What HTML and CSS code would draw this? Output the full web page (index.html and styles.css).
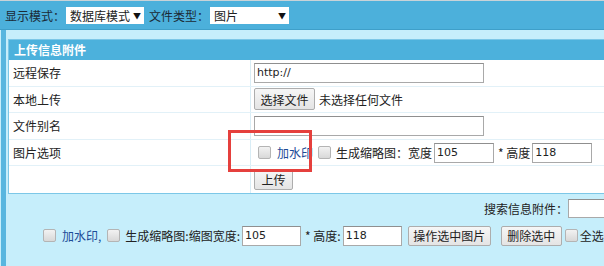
FILE: index.html
```html
<!DOCTYPE html>
<html>
  <head>
    <meta charset="utf-8">
    <title>上传信息附件</title>
    <link rel="stylesheet" href="styles.css">
  </head>
  <body>
    <div class="toolbar">
      <label class="toolbar-label">显示模式：</label>
      <span class="select-wrap select-mode">
        <select class="select"><option>数据库模式</option></select>
      </span>
      <label class="toolbar-label gap">文件类型：</label>
      <span class="select-wrap select-type">
        <select class="select"><option>图片</option></select>
      </span>
    </div>
    <div class="page">
      <div class="band"></div>
      <div class="panel">
        <div class="panel-title">上传信息附件</div>
        <div class="form-row">
          <div class="form-label">远程保存</div>
          <div class="form-value"><input class="text-input wide" type="text" value="http://"></div>
        </div>
        <div class="form-row">
          <div class="form-label">本地上传</div>
          <div class="form-value">
            <button class="btn btn-file">选择文件</button>
            <span class="file-name">未选择任何文件</span>
          </div>
        </div>
        <div class="form-row">
          <div class="form-label">文件别名</div>
          <div class="form-value"><input class="text-input wide" type="text"></div>
        </div>
        <div class="form-row">
          <div class="form-label">图片选项</div>
          <div class="form-value">
            <input class="check" type="checkbox">
            <span class="link-text">加水印</span>
            <input class="check check-thumb" type="checkbox">
            <span class="opt-text">生成缩略图：宽度</span>
            <input class="text-input num" type="text" value="105">
            <span class="opt-text star">* 高度</span>
            <input class="text-input num" type="text" value="118">
          </div>
        </div>
        <div class="form-row last">
          <div class="form-label"></div>
          <div class="form-value"><button class="btn btn-upload">上传</button></div>
        </div>
        <div class="mark"></div>
      </div>
      <div class="search-row">
        <span>搜索信息附件：</span><input class="text-input search-input" type="text">
      </div>
      <div class="action-row">
        <input class="check" type="checkbox">
        <span class="link-text">加水印,</span>
        <input class="check" type="checkbox">
        <span class="opt-text">生成缩略图:缩图宽度:</span>
        <input class="text-input num-sm" type="text" value="105">
        <span class="opt-text star">* 高度:</span>
        <input class="text-input num-sm" type="text" value="118">
        <button class="btn btn-action">操作选中图片</button>
        <button class="btn btn-delete">删除选中</button>
        <input class="check check-all" type="checkbox">
        <span class="opt-text all-text">全选</span>
      </div>
    </div>
  </body>
</html>
```

FILE: styles.css
```css
* {
  box-sizing: border-box;
  margin: 0;
  padding: 0;
}
html,
body {
  height: 100%;
}
body {
  width: 700px;
  overflow: hidden;
  background-color: #c6eefb;
  font: 12px "Noto Sans CJK SC", "DejaVu Sans", sans-serif;
  color: #222;
}
input,
button,
select {
  font: inherit;
  color: inherit;
}
.toolbar {
  display: flex;
  align-items: center;
  height: 30px;
  padding-left: 5px;
  border-top: 1px solid #c9d3d8;
  border-bottom: 1px solid #3f9fc9;
  background-color: #4cb0db;
}
.toolbar-label {
  color: #1b2a36;
}
.toolbar-label.gap {
  margin-left: 5px;
}
.select-wrap {
  position: relative;
  display: inline-block;
  margin-left: 1px;
}
.select-wrap::after {
  content: "\25BC";
  position: absolute;
  top: 3px;
  right: 3px;
  font-size: 8px;
  color: #111;
  pointer-events: none;
}
.select {
  appearance: none;
  height: 17px;
  padding: 0 4px;
  border: 0;
  background-color: #fff;
  line-height: 17px;
  color: #222;
}
.select-mode .select {
  width: 78px;
}
.select-type .select {
  width: 79px;
}
.page {
  height: calc(100% - 30px);
  margin-left: 1px;
  border-left: 5px solid #58b6df;
}
.band {
  height: 9px;
}
.panel {
  position: relative;
  margin-left: 2px;
  border: 1px solid #7cc7e7;
  border-right: 0;
  background-color: #fff;
}
.panel-title {
  height: 20px;
  padding-left: 5px;
  background-color: #4cb1dc;
  color: #fff;
  font-weight: bold;
  line-height: 20px;
}
.form-row {
  display: flex;
  height: 26.6px;
  border-bottom: 1px solid #e2f1f8;
}
.form-row.last {
  border-bottom: 0;
}
.form-label {
  width: 242px;
  padding-left: 4px;
  border-right: 1px solid #d9edf6;
  line-height: 25px;
}
.form-value {
  display: flex;
  align-items: center;
  padding-left: 3px;
}
.text-input {
  height: 20px;
  padding: 0 2px;
  border: 1px solid #a9a9a9;
  border-top-color: #8f8f8f;
  background-color: #fff;
  font-family: "DejaVu Sans", sans-serif;
  font-size: 11px;
  color: #222;
}
.text-input.wide {
  width: 230px;
}
.text-input.num {
  width: 60px;
}
.text-input.num-sm {
  width: 59px;
}
.btn {
  padding: 0;
  border: 1px solid #adadad;
  border-radius: 2px;
  background: linear-gradient(#f6f6f6, #e4e4e4);
  color: #222;
  white-space: nowrap;
}
.btn-file {
  width: 61px;
  height: 22px;
}
.btn-upload {
  width: 39px;
  height: 20px;
}
.file-name {
  margin-left: 4px;
}
.check {
  appearance: none;
  width: 13px;
  height: 13px;
  margin-left: 4px;
  border: 1px solid #b4b4b4;
  border-radius: 2px;
  background: linear-gradient(#f2f2f2, #d8d8d8);
}
.link-text {
  margin-left: 6px;
  color: #1d4c97;
}
.check-thumb {
  margin-left: 5px;
}
.opt-text {
  margin: 0 2px 0 5px;
}
.star {
  margin-left: 4px;
}
.mark {
  position: absolute;
  left: 219px;
  top: 90px;
  width: 84px;
  height: 42px;
  border: 3px solid #e5403d;
}
.search-row {
  display: flex;
  align-items: center;
  justify-content: flex-end;
  width: 662px;
  margin-top: 5px;
  height: 19px;
}
.search-input {
  width: 100px;
  height: 19px;
}
.action-row {
  display: flex;
  align-items: center;
  margin-top: 8px;
  padding-left: 33px;
  height: 20px;
}
.action-row .check {
  margin-left: 4px;
}
.action-row .check + .link-text + .check {
  margin-left: 6px;
}
.btn-action {
  width: 83px;
  height: 20px;
  margin-left: 6px;
}
.btn-delete {
  width: 61px;
  height: 20px;
  margin-left: 10px;
}
.action-row .check-all {
  margin-left: 3px;
}
.all-text {
  margin-left: 2px;
}
```
